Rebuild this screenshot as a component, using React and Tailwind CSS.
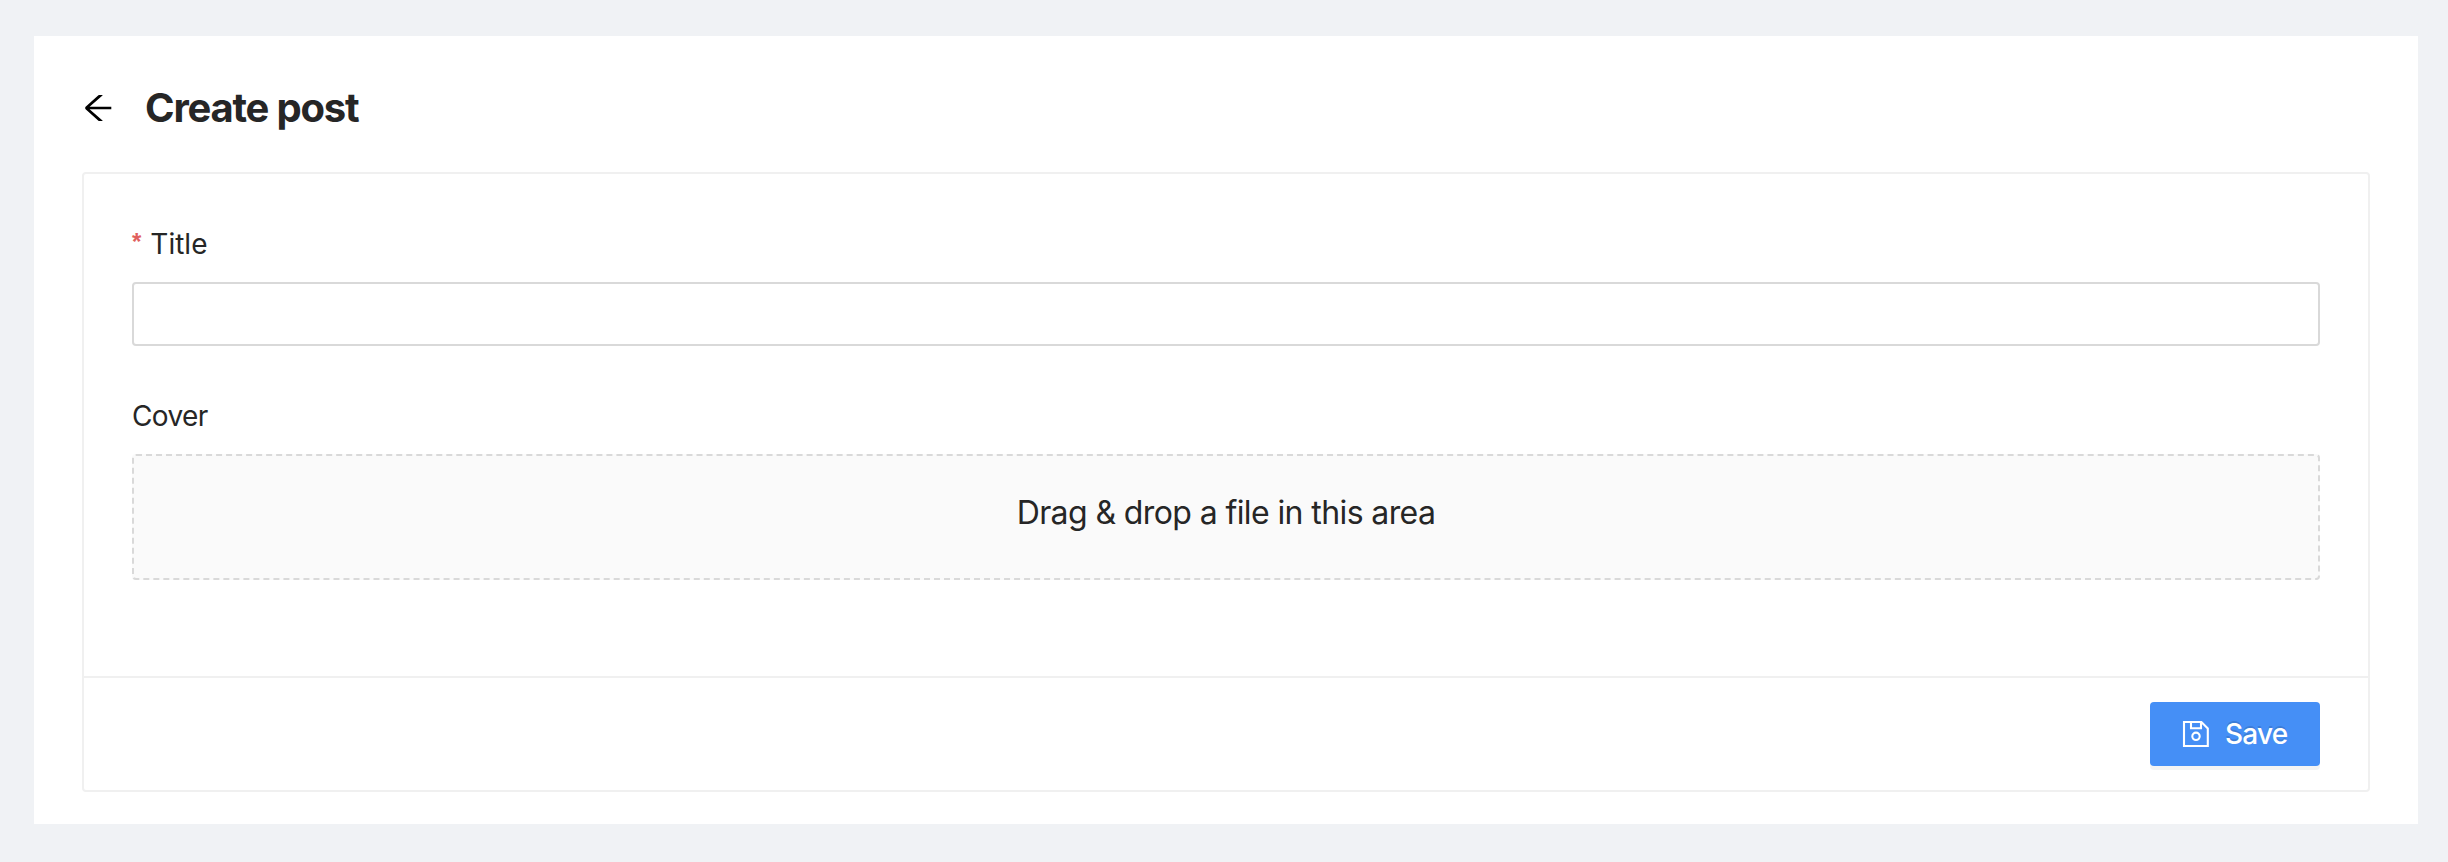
import React from "react";

function ArrowLeftIcon() {
  return (
    <svg width="36" height="36" viewBox="2 2 36 36" fill="#000" aria-hidden="true">
      <path d="M33.3 18.75H11.6L24.5 7.5Q24.9 7 24.3 7H21.2Q20.8 7 20.4 7.3L7.6 18.8Q6.5 20 7.6 21.2L20.4 32.7Q20.8 33 21.2 33H24.3Q24.9 33 24.5 32.5L11.6 21.25H33.3Z" />
    </svg>
  );
}

function SaveIcon() {
  return (
    <svg width="32" height="32" viewBox="4 6 32 32" fill="none" stroke="#fff" strokeWidth="2.1" aria-hidden="true">
      <path d="M8 10H25.4L31.8 16.4V34H8Z" />
      <path d="M15 10V16.2H25V10" />
      <circle cx="20" cy="24.3" r="3.7" />
    </svg>
  );
}

export default function App() {
  return (
    <div className="h-[862px] bg-[#f0f2f5] pt-9 pl-[34px] pr-[30px] font-['Inter',sans-serif] text-[#262626]">
      <main className="flex h-[788px] flex-col bg-white px-12">
        <header className="flex h-[136px] items-center pt-2">
          <button className="-ml-0.5" aria-label="Back">
            <ArrowLeftIcon />
          </button>
          <h1 className="ml-[29px] text-[40px] leading-[64px] font-bold tracking-[-1.2px]">Create post</h1>
        </header>
        <section className="flex h-[620px] flex-col rounded-[4px] border-2 border-[#f0f0f0]">
          <div className="flex h-[502px] flex-col px-12 pt-12">
            <label className="flex h-11 items-center text-[28px] tracking-[0px]">
              <span className="mt-2 mr-[9px] self-start font-['Liberation_Sans',sans-serif] text-[24px] leading-[24px] font-bold text-[#e0605e]">*</span>
              Title
            </label>
            <input className="mt-4 h-16 w-full rounded-[4px] border-2 border-[#d9d9d9] px-5 text-[28px] outline-none" />
            <label className="mt-12 flex h-11 items-center text-[28px] tracking-[-0.6px]">Cover</label>
            <div className="mt-4 flex h-[126px] items-center justify-center rounded-[4px] border-2 border-dashed border-[#d9d9d9] bg-[#fafafa] pb-2 text-[32px] tracking-[-0.6px]">
              <span>Drag &amp; drop a file in this area</span>
            </div>
          </div>
          <footer className="flex h-[114px] items-center justify-end border-t-2 border-[#f0f0f0] px-12">
            <button className="flex h-16 w-[170px] items-center rounded-[4px] bg-[#458ff6] pl-[30px] text-[28px] font-[450] tracking-[-0.8px] text-white shadow-[0_4px_0_rgba(0,0,0,0.045)]">
              <SaveIcon />
              <span className="ml-[13px] [text-shadow:0_-2px_0_rgba(0,0,0,0.12)]">Save</span>
            </button>
          </footer>
        </section>
      </main>
    </div>
  );
}
